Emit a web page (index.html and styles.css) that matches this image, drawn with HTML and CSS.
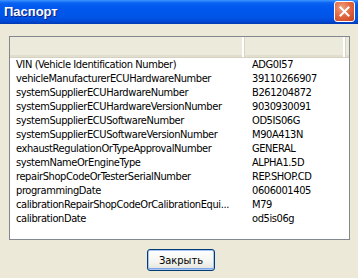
FILE: index.html
```html
<!doctype html>
<html lang="ru">
<head>
    <meta charset="UTF-8">
    <title>Паспорт</title>
    <link rel="stylesheet" href="styles.css">
</head>
<body>
    <div class="window">
        <div class="titlebar">
            <span class="title">Паспорт</span>
            <button class="close-btn" title="Закрыть">
                <svg width="11" height="11" viewBox="0 0 11 11">
                    <path d="M1.5 1.5 L9.5 9.5 M9.5 1.5 L1.5 9.5" stroke="#fff" stroke-width="2" stroke-linecap="square"/>
                </svg>
            </button>
        </div>
        <div class="content">
            <div class="listview">
                <div class="lv-header">
                    <div class="lv-col lv-name"></div>
                    <div class="lv-col lv-value"></div>
                    <div class="lv-filler"></div>
                </div>
                <div class="lv-rows">
                    <div class="lv-row"><span class="lv-name">VIN (Vehicle Identification Number)</span><span class="lv-value">ADG0I57</span></div>
                    <div class="lv-row"><span class="lv-name">vehicleManufacturerECUHardwareNumber</span><span class="lv-value">39110266907</span></div>
                    <div class="lv-row"><span class="lv-name">systemSupplierECUHardwareNumber</span><span class="lv-value">B261204872</span></div>
                    <div class="lv-row"><span class="lv-name">systemSupplierECUHardwareVersionNumber</span><span class="lv-value">9030930091</span></div>
                    <div class="lv-row"><span class="lv-name">systemSupplierECUSoftwareNumber</span><span class="lv-value">OD5IS06G</span></div>
                    <div class="lv-row"><span class="lv-name">systemSupplierECUSoftwareVersionNumber</span><span class="lv-value">M90A413N</span></div>
                    <div class="lv-row"><span class="lv-name">exhaustRegulationOrTypeApprovalNumber</span><span class="lv-value">GENERAL</span></div>
                    <div class="lv-row"><span class="lv-name">systemNameOrEngineType</span><span class="lv-value">ALPHA1.5D</span></div>
                    <div class="lv-row"><span class="lv-name">repairShopCodeOrTesterSerialNumber</span><span class="lv-value">REP.SHOP.CD</span></div>
                    <div class="lv-row"><span class="lv-name">programmingDate</span><span class="lv-value">0606001405</span></div>
                    <div class="lv-row"><span class="lv-name">calibrationRepairShopCodeOrCalibrationEqui...</span><span class="lv-value">M79</span></div>
                    <div class="lv-row"><span class="lv-name">calibrationDate</span><span class="lv-value">od5is06g</span></div>
                </div>
            </div>
            <div class="buttons">
                <button class="xp-button">Закрыть</button>
            </div>
        </div>
    </div>
</body>
</html>
```

FILE: styles.css
```css
body {
    margin: 0;
    padding: 0;
    background-color: #ece9d8;
    font-family: Tahoma, "DejaVu Sans Condensed", "DejaVu Sans", sans-serif;
    font-size: 11px;
    color: #000;
}

.window {
    width: 358px;
    height: 278px;
    overflow: hidden;
}

.titlebar {
    height: 24px;
    display: flex;
    align-items: center;
    justify-content: space-between;
    padding: 0 3px 0 4px;
    background: linear-gradient(to bottom, #3d95ff 0%, #0a63f2 12%, #0058ee 30%, #0055e8 70%, #0048d4 90%, #0039b0 100%);
}

.title {
    color: #fff;
    font-family: "Liberation Sans", Arial, sans-serif;
    font-weight: bold;
    font-size: 13px;
    text-shadow: 1px 1px 0 #0a1e80;
    padding-bottom: 1px;
}

.close-btn {
    width: 21px;
    height: 21px;
    padding: 0;
    margin-top: -2px;
    border: 1px solid #fff;
    border-radius: 3px;
    background: radial-gradient(circle at 35% 30%, #f0a080 0%, #e36a44 45%, #c7401d 100%);
    display: flex;
    align-items: center;
    justify-content: center;
}

.content {
    padding: 12px 8px 0 9px;
}

.listview {
    height: 202px;
    border: 1px solid #828790;
    background: #fff;
    overflow: hidden;
}

.lv-header {
    display: flex;
    height: 20px;
    background: #ebeadb;
    border-bottom: 1px solid #d6d2c2;
    box-shadow: inset 0 -2px 0 #e2decd;
}

.lv-header .lv-col {
    border-right: 1px solid #d8d5c6;
    box-shadow: inset -2px 0 0 #fff;
}

.lv-name {
    width: 235px;
    flex: none;
    padding-left: 6px;
    box-sizing: border-box;
    white-space: nowrap;
    overflow: hidden;
}

.lv-value {
    width: 101px;
    flex: none;
    padding-left: 7px;
    box-sizing: border-box;
    white-space: nowrap;
}

.lv-filler {
    flex: 1;
}

.lv-row {
    display: flex;
    height: 14px;
    line-height: 14px;
    letter-spacing: -0.4px;
}

.buttons {
    display: flex;
    justify-content: center;
    padding-top: 9px;
    padding-left: 3px;
}

.xp-button {
    width: 68px;
    height: 22px;
    font-family: Tahoma, "DejaVu Sans Condensed", "DejaVu Sans", sans-serif;
    font-size: 11px;
    color: #000;
    border: 1px solid #003c74;
    border-radius: 3px;
    background: linear-gradient(to bottom, #ffffff 0%, #f4f4f0 60%, #e3e2da 100%);
    box-shadow: inset 0 0 0 1px #a9c5f3, inset 0 -1px 0 1px #7ea6e8;
    padding: 0;
}
```
